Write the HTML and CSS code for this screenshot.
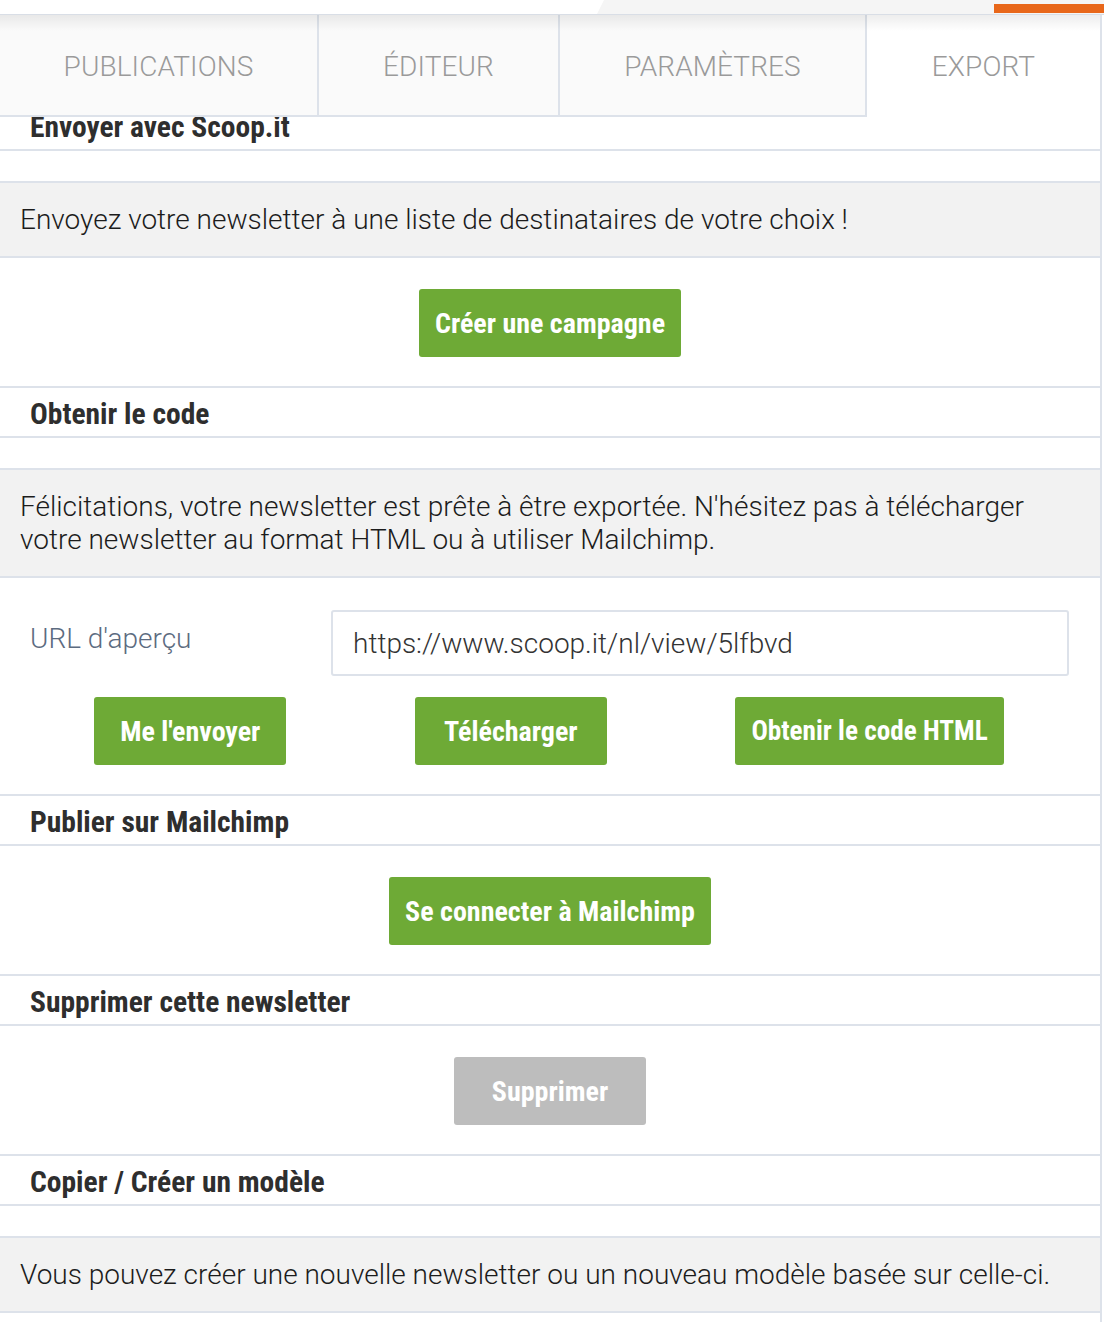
FILE: index.html
```html
<!DOCTYPE html>
<html lang="fr">
<head>
<meta charset="utf-8">
<title>Export</title>
<link rel="stylesheet" href="styles.css">
</head>
<body>
<div class="page">
  <header class="topbar">
    <div class="strip">
      <div class="strip-white"></div>
      <div class="strip-accent"></div>
    </div>
    <nav class="tabs">
      <div class="tab tab-1">PUBLICATIONS</div>
      <div class="tab tab-2">ÉDITEUR</div>
      <div class="tab tab-3">PARAMÈTRES</div>
      <div class="tab tab-4 active">EXPORT</div>
    </nav>
  </header>
  <main class="content">
    <h2 class="sec-title">Envoyer avec Scoop.it</h2>
    <div class="spacer"></div>
    <p class="note">Envoyez votre newsletter à une liste de destinataires de votre choix !</p>
    <div class="actions"><button class="btn">Créer une campagne</button></div>

    <h2 class="sec-title">Obtenir le code</h2>
    <div class="spacer"></div>
    <p class="note">Félicitations, votre newsletter est prête à être exportée. N'hésitez pas à télécharger votre newsletter au format HTML ou à utiliser Mailchimp.</p>
    <div class="export-box">
      <div class="url-row">
        <label class="url-label">URL d'aperçu</label>
        <div class="url-input">https://www.scoop.it/nl/view/5lfbvd</div>
      </div>
      <div class="btn-row">
        <button class="btn btn-wide">Me l'envoyer</button>
        <button class="btn btn-wide">Télécharger</button>
        <button class="btn btn-wide">Obtenir le code HTML</button>
      </div>
    </div>

    <h2 class="sec-title">Publier sur Mailchimp</h2>
    <div class="actions"><button class="btn">Se connecter à Mailchimp</button></div>

    <h2 class="sec-title">Supprimer cette newsletter</h2>
    <div class="actions"><button class="btn btn-disabled">Supprimer</button></div>

    <h2 class="sec-title">Copier / Créer un modèle</h2>
    <div class="spacer"></div>
    <p class="note">Vous pouvez créer une nouvelle newsletter ou un nouveau modèle basée sur celle-ci.</p>
    <div class="tail"></div>
  </main>
</div>
</body>
</html>
```

FILE: styles.css
```css
* { box-sizing: border-box; }

html, body {
  margin: 0;
  padding: 0;
  background: #ffffff;
}

body {
  font-family: Roboto, "Liberation Sans", sans-serif;
  font-weight: 300;
  color: #1c1c1c;
}

.page {
  width: 1102px;
  border-right: 2px solid #dde2ea;
  min-height: 1322px;
  background: #fff;
}

/* ---------- top bar ---------- */
.topbar {
  position: relative;
  z-index: 2;
}

.strip {
  height: 15px;
  background: #f5f5f5;
  border-bottom: 1px solid #d9dee6;
  margin-right: -4px;
  display: flex;
  position: relative;
}

.strip-white {
  width: 604px;
  height: 14px;
  background: #fff;
  clip-path: polygon(0 0, 100% 0, 597px 100%, 0 100%);
}

.strip-accent {
  position: absolute;
  right: 0;
  top: 4px;
  width: 110px;
  height: 9px;
  background: #e8671a;
}

.tabs {
  display: grid;
  grid-template-columns: 319px 241px 307px 1fr;
  height: 102px;
  position: relative;
}

.tabs::after {
  content: "";
  position: absolute;
  left: 0;
  right: 0;
  top: 0;
  height: 16px;
  background: linear-gradient(rgba(0, 0, 0, 0.07), rgba(0, 0, 0, 0));
  pointer-events: none;
}

.tab {
  display: flex;
  align-items: center;
  justify-content: center;
  background: #fafafa;
  border-bottom: 2px solid #dde2ea;
  border-right: 2px solid #dde2ea;
  font-size: 28px;
  font-weight: 300;
  color: #9a9a9a;
  letter-spacing: 0.1px;
  padding-top: 2px;
}

.tab.active {
  background: #fff;
  border-bottom-color: transparent;
  border-right: none;
}

/* ---------- content ---------- */
.content {
  margin-top: -16px;
}

.sec-title {
  margin: 0;
  height: 50px;
  line-height: 48px;
  padding-left: 30px;
  padding-top: 2px;
  border-bottom: 2px solid #dde2ea;
  font-family: "Roboto Condensed", "Liberation Sans Narrow", "DejaVu Sans Condensed", sans-serif;
  font-weight: 700;
  font-stretch: condensed;
  font-size: 29.5px;
  color: #2e2e2e;
}

.spacer {
  height: 32px;
  border-bottom: 2px solid #dde2ea;
}

.note {
  margin: 0;
  padding: 20px 20px;
  background: #f2f2f2;
  border-bottom: 2px solid #dde2ea;
  font-size: 28px;
  line-height: 33px;
  color: #1c1c1c;
}

.actions {
  height: 130px;
  display: flex;
  justify-content: center;
  align-items: flex-start;
  padding-top: 31px;
  border-bottom: 2px solid #dde2ea;
}

.btn {
  height: 68px;
  padding: 0 16px;
  border: none;
  border-radius: 3px;
  background: #6eaa36;
  color: #fff;
  font-family: "Roboto Condensed", "Liberation Sans Narrow", "DejaVu Sans Condensed", sans-serif;
  font-weight: 700;
  font-stretch: condensed;
  font-size: 28px;
  cursor: pointer;
}

.btn-wide {
  min-width: 192px;
}

.btn-disabled {
  background: #bdbdbd;
  padding: 0 38px;
}

.export-box {
  height: 218px;
  padding: 32px 31px 0 30px;
  border-bottom: 2px solid #dde2ea;
}

.url-row {
  display: grid;
  grid-template-columns: 301px 1fr;
  align-items: start;
}

.url-label {
  padding-top: 12px;
  font-size: 28px;
  line-height: 33px;
  color: #5c6b80;
}

.url-input {
  height: 66px;
  border: 2px solid #dde2ea;
  border-radius: 3px;
  padding: 0 20px;
  display: flex;
  align-items: center;
  font-size: 28px;
  color: #333;
}

.btn-row {
  display: flex;
  justify-content: space-around;
  margin-top: 21px;
  margin-right: 1px;
}

.btn-row .btn:last-child {
  font-size: 27.2px;
}

.tail {
  height: 9px;
}
```
